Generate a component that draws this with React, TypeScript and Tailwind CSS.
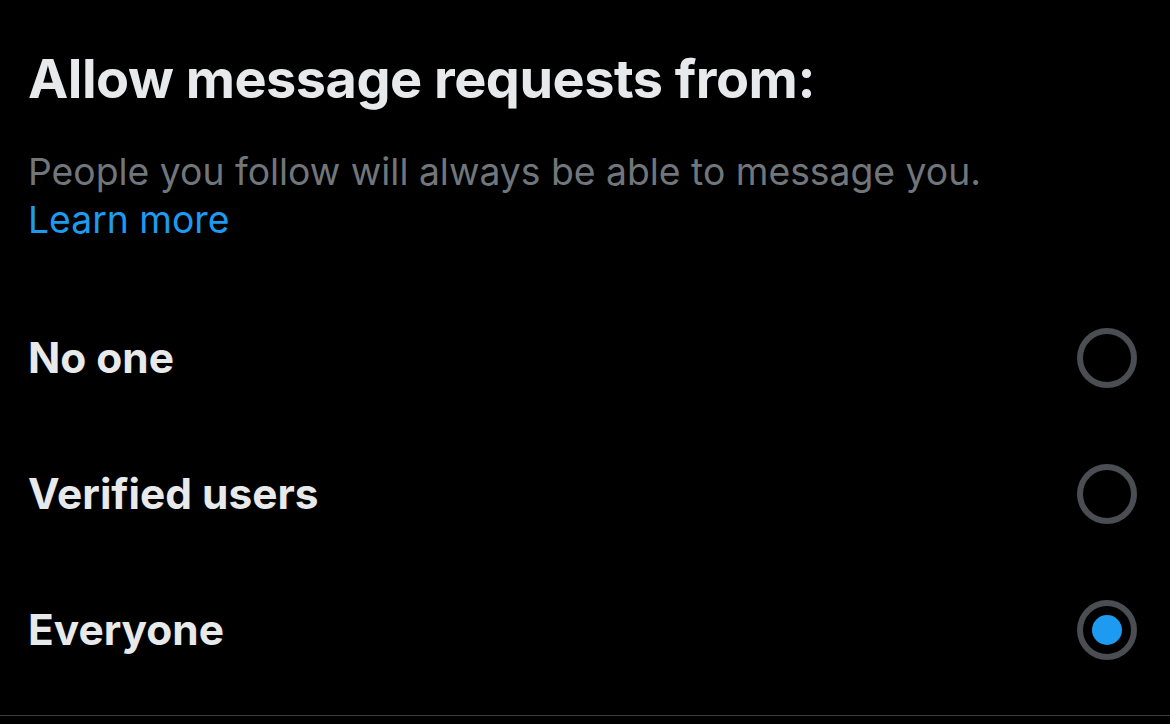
import React, { useState } from "react";

const options = ["No one", "Verified users", "Everyone"];

function Radio({ checked }: { checked: boolean }) {
  return (
    <div className="flex items-center justify-center w-[60px] h-[60px] rounded-full border-[6px] border-[#4a4d51]">
      {checked && <div className="w-[30px] h-[30px] rounded-full bg-[#1d9bf0]" />}
    </div>
  );
}

export default function App() {
  const [selected, setSelected] = useState("Everyone");

  return (
    <div
      className="w-[1170px] h-[724px] bg-black overflow-hidden"
      style={{ fontFamily: "Inter, 'Noto Sans', sans-serif" }}
    >
      <div className="px-[28px] pt-[47px]">
        <h1 className="text-[54px] leading-[64px] font-bold text-[#e7e9ea] tracking-[-0.5px]">
          Allow message requests from:
        </h1>
        <p className="mt-[37px] text-[37.3px] leading-[48px] text-[#71767b]">
          People you follow will always be able to message you.
          <br />
          <span className="text-[#1d9bf0]">Learn more</span>
        </p>
      </div>
      <div className="mt-[46px]">
        {options.map((option) => (
          <div
            key={option}
            className="flex items-center justify-between h-[136px] pl-[28px] pr-[33px] cursor-pointer"
            onClick={() => setSelected(option)}
          >
            <span className="text-[42.4px] font-bold text-[#e7e9ea]">{option}</span>
            <Radio checked={selected === option} />
          </div>
        ))}
      </div>
      <div className="mt-[17px] border-b border-[#3a3c3f]" />
    </div>
  );
}
